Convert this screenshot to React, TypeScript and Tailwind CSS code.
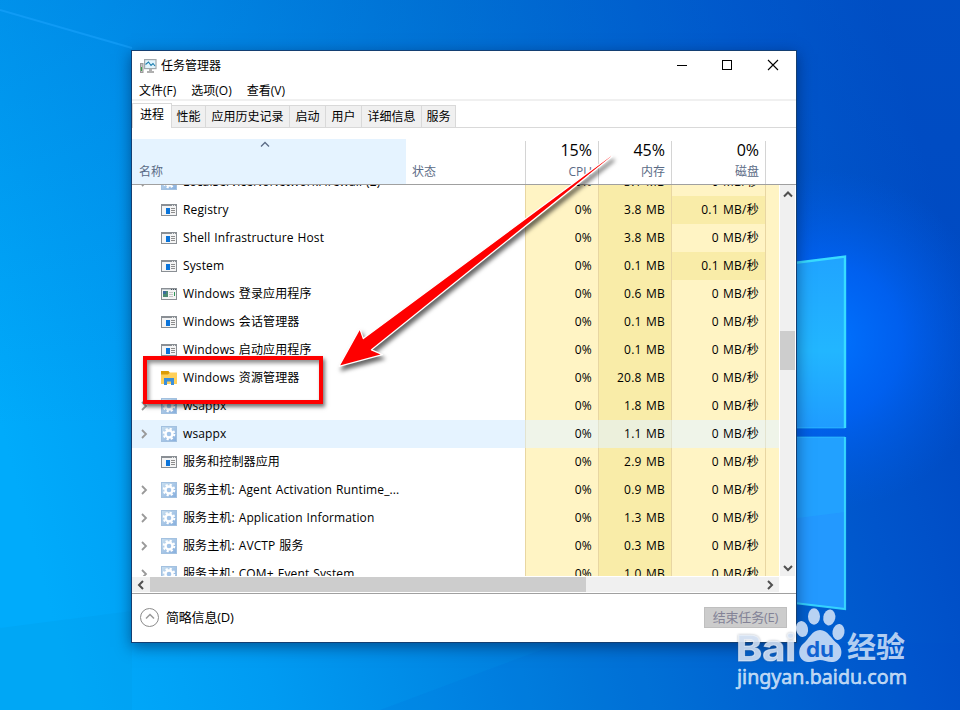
import clsx from "clsx";

type IconKind = "app" | "logon" | "folder" | "gear";

type Process = {
  name: string;
  icon: IconKind;
  memory: string;
  disk: string;
  expandable?: boolean;
  selected?: boolean;
};

const processes: Process[] = [
  { name: "LocalServiceNoNetworkFirewall (2)", icon: "gear", memory: "3.1 MB", disk: "0 MB/秒", expandable: true },
  { name: "Registry", icon: "app", memory: "3.8 MB", disk: "0.1 MB/秒" },
  { name: "Shell Infrastructure Host", icon: "app", memory: "3.8 MB", disk: "0 MB/秒" },
  { name: "System", icon: "app", memory: "0.1 MB", disk: "0.1 MB/秒" },
  { name: "Windows 登录应用程序", icon: "logon", memory: "0.6 MB", disk: "0 MB/秒" },
  { name: "Windows 会话管理器", icon: "app", memory: "0.1 MB", disk: "0 MB/秒" },
  { name: "Windows 启动应用程序", icon: "app", memory: "0.1 MB", disk: "0 MB/秒" },
  { name: "Windows 资源管理器", icon: "folder", memory: "20.8 MB", disk: "0 MB/秒" },
  { name: "wsappx", icon: "gear", memory: "1.8 MB", disk: "0 MB/秒", expandable: true },
  { name: "wsappx", icon: "gear", memory: "1.1 MB", disk: "0 MB/秒", expandable: true, selected: true },
  { name: "服务和控制器应用", icon: "app", memory: "2.9 MB", disk: "0 MB/秒" },
  { name: "服务主机: Agent Activation Runtime_...", icon: "gear", memory: "0.9 MB", disk: "0 MB/秒", expandable: true },
  { name: "服务主机: Application Information", icon: "gear", memory: "1.3 MB", disk: "0 MB/秒", expandable: true },
  { name: "服务主机: AVCTP 服务", icon: "gear", memory: "0.3 MB", disk: "0 MB/秒", expandable: true },
  { name: "服务主机: COM+ Event System", icon: "gear", memory: "1.0 MB", disk: "0 MB/秒", expandable: true },
];

const tabs = [
  { label: "性能", width: "w-[34px]" },
  { label: "应用历史记录", width: "w-[84px]" },
  { label: "启动", width: "w-[36px]" },
  { label: "用户", width: "w-[36px]" },
  { label: "详细信息", width: "w-[60px]" },
  { label: "服务", width: "w-[34px]" },
];

function Chevron({ dir, className }: { dir: "up" | "down" | "left" | "right"; className?: string }) {
  const paths = {
    up: "M1 6.5 L5 2.5 L9 6.5",
    down: "M1 3 L5 7 L9 3",
    left: "M7 1 L3 5 L7 9",
    right: "M3 1 L7 5 L3 9",
  };
  return (
    <svg viewBox="0 0 10 10" className={clsx("h-2.5 w-2.5 shrink-0", className)} fill="none" stroke="currentColor">
      <path d={paths[dir]} />
    </svg>
  );
}

function ProcessIcon({ kind }: { kind: IconKind }) {
  if (kind === "gear") {
    return (
      <svg viewBox="0 0 16 16" className="h-4 w-4 shrink-0">
        <defs>
          <linearGradient id="gearBg" x1="0" y1="0" x2="1" y2="1">
            <stop offset="0" stopColor="#c9dff0" />
            <stop offset="1" stopColor="#86aedd" />
          </linearGradient>
        </defs>
        <rect x="0.5" y="0.5" width="15" height="15" fill="url(#gearBg)" stroke="#a3c1e0" />
        <circle cx="8" cy="8" r="5.3" fill="none" stroke="#fff" strokeWidth="2" strokeDasharray="2.2 1.96" />
        <circle cx="8" cy="8" r="3.5" fill="#a3c4e8" stroke="#fff" strokeWidth="2.4" />
      </svg>
    );
  }
  if (kind === "folder") {
    return (
      <svg viewBox="0 0 16 16" className="h-4 w-4 shrink-0">
        <path d="M0 1 H7.5 L9 3 V6 H0 Z" fill="#dd9d06" />
        <path d="M0 4.5 H7 L9 2.5 H16 V14 H0 Z" fill="#ffd05a" />
        <path d="M3 15 V8 H13 V15 H10 V11.5 H6 V15 Z" fill="#3a8fdc" />
      </svg>
    );
  }
  return (
    <svg viewBox="0 0 16 12" className="h-3 w-4 shrink-0" shapeRendering="crispEdges">
      <rect width="16" height="12" fill="#8a8f94" />
      <rect x="1" y="2" width="14" height="9" fill="#f4f4f4" />
      {kind === "logon" ? (
        <>
          <rect x="1" y="1" width="14" height="1" fill="#c2c8cc" />
          <rect x="2" y="3" width="5" height="6" fill="#4b8a72" />
          <rect x="2" y="3" width="3" height="3" fill="#3c6b9c" />
          <path d="M8 4.5 H12 M8 6.5 H12 M8 8.5 H12" stroke="#c6c6c6" />
          <rect x="13" y="4" width="1" height="4" fill="#2f9a58" />
          <path d="M10 1.5 H11 M12 1.5 H13 M14 1.5 H15" stroke="#46535c" />
        </>
      ) : (
        <>
          <rect x="5" y="4" width="4" height="6" fill="#0a74da" />
          <path d="M10 4.5 H14 M10 6.5 H14 M10 8.5 H14" stroke="#8d8d8d" />
          <path d="M11 1.5 H12 M13 1.5 H14" stroke="#e8e8e8" />
        </>
      )}
    </svg>
  );
}

function ProcessRow({ process }: { process: Process }) {
  const { selected } = process;
  const light = selected ? "bg-[#eff4e9]" : "bg-[#fff4c4]";
  const dark = selected ? "bg-[#ecf0dc]" : "bg-[#f9eca8]";
  const line = selected ? "border-[#e3e3cf]" : "border-[#e8d6a2]";
  const cell = "flex h-full items-center justify-end border-r pr-[6px] tracking-[0.25px] [word-spacing:0.9px]";

  return (
    <div className="flex h-7 w-[648px] shrink-0 whitespace-nowrap">
      <div className={clsx("flex h-full w-[394px] items-center border-r pl-[7px]", line, selected && "bg-[#e5f3ff]")}>
        <span className="flex w-[22px] text-[#999]">
          {process.expandable && <Chevron dir="right" className="[stroke-width:1.8]" />}
        </span>
        <ProcessIcon kind={process.icon} />
        <span className="ml-[6px] tracking-[0.12px] [word-spacing:0.7px]">{process.name}</span>
      </div>
      <div className={clsx(cell, "w-[73px]", light, line)}>0%</div>
      <div className={clsx(cell, "w-[73px]", dark, line)}>{process.memory}</div>
      <div className={clsx(cell, "w-[94px]", process.disk.startsWith("0.1") ? dark : light, line)}>{process.disk}</div>
      <div className={clsx("grow", light)} />
    </div>
  );
}

function UsageHeader({ value, label, width }: { value: string; label: string; width: string }) {
  return (
    <div className={clsx("mt-[2px] flex flex-col items-end border-r border-[#d4d4d4] pr-[6px]", width)}>
      <span className="text-base leading-[18px]">{value}</span>
      <span className="mt-[4px] leading-[18px] text-[#5b6b86]">{label}</span>
    </div>
  );
}

function Wallpaper() {
  return (
    <svg viewBox="0 0 960 710" className="absolute inset-0 h-full w-full">
      <defs>
        <linearGradient id="sky" x1="0" y1="0.6" x2="1" y2="0.4">
          <stop offset="0" stopColor="#00abfb" />
          <stop offset="0.2" stopColor="#009bf2" />
          <stop offset="0.55" stopColor="#0076d8" />
          <stop offset="0.85" stopColor="#0055cc" />
          <stop offset="1" stopColor="#0048c2" />
        </linearGradient>
        <linearGradient id="topShade" x1="0" y1="0" x2="0" y2="1">
          <stop offset="0" stopColor="#0060c8" stopOpacity="0.25" />
          <stop offset="0.6" stopColor="#0060c8" stopOpacity="0" />
        </linearGradient>
        <radialGradient id="glow" gradientUnits="userSpaceOnUse" cx="825" cy="340" r="170">
          <stop offset="0" stopColor="#0074ff" />
          <stop offset="0.45" stopColor="#0066ff" stopOpacity="0.7" />
          <stop offset="1" stopColor="#005ce8" stopOpacity="0" />
        </radialGradient>
        <linearGradient id="paneTop" x1="0" y1="0" x2="0" y2="1">
          <stop offset="0" stopColor="#20a4ff" />
          <stop offset="0.55" stopColor="#22b6ff" />
          <stop offset="1" stopColor="#1f9cff" />
        </linearGradient>
      </defs>
      <rect width="960" height="710" fill="url(#sky)" />
      <rect width="960" height="710" fill="url(#topShade)" />
      <rect width="960" height="710" fill="url(#glow)" />
      <path d="M0 10 L132 48" stroke="#1ea6ff" strokeWidth="2" strokeOpacity="0.5" />
      <path d="M0 628 L132 611 V710 H0 Z" fill="#0098e0" fillOpacity="0.18" />
      <path d="M380 710 L560 643 H960 V710 Z" fill="#0050c8" fillOpacity="0.08" />
      <path d="M790 263.5 L845 256.5 V428 H790 Z" fill="url(#paneTop)" />
      <path d="M790 437 H845 V609 L790 602.5 Z" fill="#2399ff" />
      <path d="M790 519 L845 512 V437 H790 Z" fill="#22a8ff" fillOpacity="0.55" />
      <g fill="none" stroke="#38dcff">
        <path d="M790 263.5 L845 256.5 V428" strokeWidth="2.4" />
        <path d="M790 428 H845 M790 437 H845" strokeWidth="1.2" strokeOpacity="0.5" />
        <path d="M845 437 V609 L790 602.5" strokeWidth="2.2" strokeOpacity="0.9" />
      </g>
    </svg>
  );
}

function Annotations() {
  return (
    <>
      <div className="absolute left-[143px] top-[356px] h-[48px] w-[180px] border-4 border-[#fe0000] shadow-[2px_3px_4px_rgba(0,0,0,0.55),inset_2px_3px_4px_rgba(0,0,0,0.45)]" />
      <svg viewBox="0 0 960 710" className="pointer-events-none absolute inset-0 h-full w-full">
        <path
          d="M339 366.3 L359.8 328.6 L363.3 338.6 L611 155.5 L612 156.5 L371.5 349.8 L382.5 354.6 Z"
          fill="#fe0000"
          stroke="#fff"
          strokeWidth="1.3"
          strokeLinejoin="round"
          className="[filter:drop-shadow(2px_4px_2px_rgba(0,0,0,0.6))]"
        />
      </svg>
    </>
  );
}

function Watermark() {
  return (
    <svg viewBox="0 0 190 90" className="absolute left-[730px] top-[603px] h-[90px] w-[190px]">
      <g fill="#dbe8fa" fillOpacity="0.84">
        <g fontFamily="Inter, sans-serif" fontWeight="700" stroke="#fff" strokeOpacity="0.5">
          <text x="6" y="57.5" fontSize="36" textLength="60" lengthAdjust="spacingAndGlyphs" className="[filter:drop-shadow(0_0_1px_rgba(60,80,110,0.5))]">
            Bai
          </text>
        </g>
        <ellipse cx="72" cy="26" rx="6" ry="8" transform="rotate(-12 72 26)" />
        <ellipse cx="84" cy="13.5" rx="6" ry="8.2" />
        <ellipse cx="99.3" cy="14.5" rx="6" ry="8" transform="rotate(10 99.3 14.5)" />
        <ellipse cx="108.5" cy="29" rx="6" ry="8" transform="rotate(10 108.5 29)" />
        <path d="M90 27 C82 27 79 36 73 41 C67 46 68 58 78 59 C83 59.5 87 57 90 57 C94 57 98 59.5 103 59 C112 58 114 47 108 41 C101 36 98 27 90 27 Z" />
        <text x="117" y="55" fontSize="29" fontWeight="700" fontFamily="'Noto Sans CJK SC', sans-serif" textLength="58" lengthAdjust="spacingAndGlyphs">
          经验
        </text>
        <text x="7" y="80.5" fontSize="19" fontFamily="'Noto Sans', sans-serif" textLength="170" lengthAdjust="spacingAndGlyphs" stroke="#dbe8fa" strokeWidth="0.5">
          jingyan.baidu.com
        </text>
      </g>
      <text x="76" y="54" fontSize="22" fontWeight="700" fontFamily="Inter, sans-serif" fill="#1163d2" textLength="28" lengthAdjust="spacingAndGlyphs">
        du
      </text>
    </svg>
  );
}

export default function App() {
  return (
    <div className="relative h-[710px] w-[960px] overflow-hidden pl-[131px] pt-[50px] font-['Open_Sans','Noto_Sans_CJK_SC',sans-serif] text-xs leading-[16px] text-black">
      <Wallpaper />

      <div className="relative flex h-[593px] w-[666px] flex-col border border-[#143f72] bg-white shadow-[0_4px_14px_rgba(0,20,60,0.5)]">
        {/* Title bar */}
        <div className="flex h-[30px] shrink-0 items-center pl-[8px]">
          <svg viewBox="0 0 17 16" className="h-4 w-[17px]">
            <rect x="0.5" y="5.5" width="2.5" height="9" fill="#c4c4c4" stroke="#9a9a9a" />
            <rect x="1" y="9" width="1" height="4" fill="#3aa24b" />
            <rect x="4.6" y="1.6" width="11.4" height="9" fill="#e2f4fc" stroke="#a0a8ad" strokeWidth="1.2" />
            <path d="M5.5 6.5 L8.5 4 L11 7.5 L13 5.5 L15 8" fill="none" stroke="#1e7fb0" strokeWidth="1.1" />
            <path d="M9 11 H12 V13 H14 V15 H7 V13 H9 Z" fill="#b0b0b0" />
          </svg>
          <span className="ml-1">任务管理器</span>
          <div className="ml-auto flex h-full items-start pr-[17px] pt-[8px]">
            <svg viewBox="0 0 102 12" className="h-3 w-[102px]" fill="none" stroke="#000">
              <path d="M0 6.5 H10" />
              <rect x="45.5" y="1.5" width="9" height="9" />
              <path d="M91 1 L101 11 M101 1 L91 11" strokeWidth="1.1" />
            </svg>
          </div>
        </div>

        {/* Menu */}
        <div className="flex h-[20px] shrink-0 items-center gap-[15px] border-b-2 border-[#f0f0f0] pl-[7px] pt-[2px]">
          <span>文件(F)</span>
          <span>选项(O)</span>
          <span>查看(V)</span>
        </div>

        {/* Tabs */}
        <div className="flex h-[27px] shrink-0 items-end">
          <div className="h-[25px] w-[40px] border-x border-t border-[#d9d9d9] bg-white pl-[7px] pt-[3px]">进程</div>
          {tabs.map((tab) => (
            <div
              key={tab.label}
              className={clsx(
                "flex h-[23px] items-center justify-center whitespace-nowrap border-y border-r border-[#d9d9d9] bg-[#f0f0f0]",
                tab.width,
              )}
            >
              {tab.label}
            </div>
          ))}
          <div className="h-px grow bg-[#d9d9d9]" />
        </div>

        {/* Column headers */}
        <div className="mt-[11px] flex h-[46px] shrink-0 border-b border-[#a0a0a0]">
          <div className="flex w-[274px] flex-col justify-between bg-[#e5f3ff] pb-[4px] pl-[7px] text-[#5b6b86]">
            <Chevron dir="up" className="ml-[121px] mt-[1px] [stroke-width:1.3]" />
            <span>名称</span>
          </div>
          <div className="mt-[2px] flex w-[120px] items-end border-r border-[#d4d4d4] pb-[4px] pl-[6px] text-[#5b6b86]">状态</div>
          <UsageHeader value="15%" label="CPU" width="w-[73px]" />
          <UsageHeader value="45%" label="内存" width="w-[73px]" />
          <UsageHeader value="0%" label="磁盘" width="w-[94px]" />
        </div>

        {/* Process list */}
        <div className="flex h-[391px] shrink-0">
          <div className="flex w-[647px] flex-col overflow-hidden">
            <div className="-mt-[17px] flex flex-col">
              {processes.map((p, i) => (
                <ProcessRow key={i} process={p} />
              ))}
            </div>
          </div>
          <div className="ml-px flex w-[15px] flex-col items-center bg-[#f0f0f0] pt-[5px] text-[#505050]">
            <Chevron dir="up" className="[stroke-width:2]" />
            <div className="mt-[131px] h-[39px] w-full bg-[#cdcdcd]" />
            <Chevron dir="down" className="mb-[3px] mt-auto [stroke-width:2]" />
          </div>
        </div>
        <div className="mt-px flex h-[15px] w-[647px] shrink-0 items-center bg-[#f0f0f0] pl-[4px] pr-[4px] text-[#505050]">
          <Chevron dir="left" className="[stroke-width:2]" />
          <div className="ml-[4px] h-full w-[436px] bg-[#cdcdcd]" />
          <Chevron dir="right" className="ml-auto [stroke-width:2]" />
        </div>

        {/* Footer */}
        <div className="mt-px flex grow items-center border-t border-[#a0a0a0] pb-[2px] pl-[8px] pr-[9px] text-[13px] tracking-[-0.2px]">
          <div className="flex h-[19px] w-[19px] items-center justify-center rounded-full border border-[#8c8c8c] text-[#999]">
            <Chevron dir="up" className="[stroke-width:1.5]" />
          </div>
          <span className="ml-[7px]">简略信息(D)</span>
          <div className="ml-auto flex h-[21px] w-[83px] items-center justify-center border border-[#bfbfbf] bg-[#cccccc] text-[#838397]">
            结束任务(E)
          </div>
        </div>
      </div>

      <Annotations />
      <Watermark />
    </div>
  );
}
